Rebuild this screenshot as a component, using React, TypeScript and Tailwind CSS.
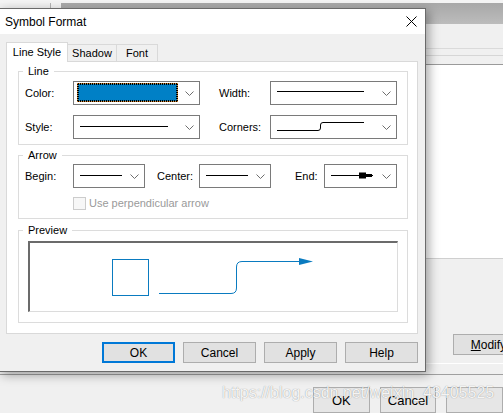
import React from "react";

const Chevron = () => (
  <svg width="9" height="5" viewBox="0 0 9 5">
    <path d="M0.5 0.5 L4.5 4.5 L8.5 0.5" fill="none" stroke="#6e6e6e" strokeWidth="1" />
  </svg>
);

function Combo({ w, children }: { w: string; children?: React.ReactNode }) {
  return (
    <div className={`${w} h-[24px] shrink-0 border border-[#7a7a7a] bg-white flex items-center`}>
      <div className="flex-1 h-full flex items-center pl-[6px]">{children}</div>
      <div className="w-[20px] h-full flex items-center justify-center">
        <Chevron />
      </div>
    </div>
  );
}

const HLine = ({ w, dy = 0 }: { w: number; dy?: number }) => (
  <svg width={w} height="3" viewBox={`0 0 ${w} 3`} style={{ marginTop: dy }}>
    <line x1="0" y1="1.5" x2={w} y2="1.5" stroke="#000" strokeWidth="1" />
  </svg>
);

function Btn({ label, primary }: { label: string; primary?: boolean }) {
  return (
    <div
      className={
        primary
          ? "w-[73px] h-[21px] border-2 border-[#0078d7] bg-[#e1e1e1] flex items-center justify-center text-[12px] text-black"
          : "w-[73px] h-[21px] border border-[#adadad] bg-[#e1e1e1] flex items-center justify-center text-[12px] text-black"
      }
    >
      {label}
    </div>
  );
}

export default function App() {
  return (
    <div className="relative w-[503px] h-[413px] overflow-hidden bg-[#f0f0f0] font-['Liberation_Sans',Arial,sans-serif] text-black">
      {/* background window */}
      <div className="flex flex-col h-full">
        <div className="h-[3px] bg-[#f4f4f4]" />
        <div className="h-[22px] flex">
          <div className="w-[51px] bg-[#f2f2f2] border-r border-[#b4b4b4]" />
          <div className="w-[10px] bg-[#f4f4f4]" />
          <div className="flex-1 bg-gradient-to-b from-[#a8a8a8] to-[#bcbcbc]" />
        </div>
        <div className="h-[25px] bg-[#f0f0f0] border-b border-[#dadada]" />
        <div className="h-[8px] bg-[#f0f0f0] border-b border-[#d6d6d6]" />
        <div className="h-[9px] bg-[#f0f0f0] border-b border-[#9a9a9a]" />
        <div className="h-[200px] bg-white border-b border-[#cfcfcf]" />
        <div className="h-[105px] bg-[#f0f0f0] pt-[75px] pl-[453px]">
          <div className="w-[80px] h-[21px] border border-[#adadad] bg-[#e1e1e1] flex items-center justify-center text-[12px] whitespace-nowrap">
            <span>
              <span className="underline">M</span>odify...
            </span>
          </div>
        </div>
        <div className="h-[1px] bg-white" />
        <div className="h-[11px] bg-[#f0f0f0] border-b border-[#a0a0a0]" />
        <div className="flex-1 bg-[#f0f0f0] pt-[12px] pl-[313px] flex gap-[10px]">
          <div className="w-[73px] h-[26px] border border-[#adadad] bg-[#e6e6e6] flex justify-center pt-[3px] text-[13px]">OK</div>
          <div className="w-[73px] h-[26px] border border-[#adadad] bg-[#e6e6e6] flex justify-center pt-[3px] text-[13px]">Cancel</div>
          <div className="w-[73px] h-[26px] border border-[#adadad] bg-[#e6e6e6]" />
        </div>
      </div>

      {/* dialog window */}
      <div className="absolute left-[-1px] top-[8px] w-[427px] h-[364px] border border-[#6a6a6a] bg-[#f0f0f0] flex flex-col shadow-[3px_3px_10px_rgba(0,0,0,0.35)]">
        <div className="h-[25px] bg-white flex items-center justify-between pl-[5px] pr-[8px]">
          <span className="text-[12px]">Symbol Format</span>
          <svg width="11" height="11" viewBox="0 0 11 11">
            <path d="M0.5 0.5 L10.5 10.5 M10.5 0.5 L0.5 10.5" stroke="#000" strokeWidth="1" />
          </svg>
        </div>
        <div className="flex-1 flex flex-col pt-[8px] pl-[6px] pr-[7px] text-[11px]">
          {/* tabs */}
          <div className="h-[19px] flex items-end relative z-10">
            <div className="w-[62px] h-[20px] -mb-[1px] bg-white border-t border-l border-r border-[#d9d9d9] flex items-center justify-center">
              Line Style
            </div>
            <div className="w-[49px] h-[17px] border-t border-r border-[#d9d9d9] flex items-center justify-center">
              Shadow
            </div>
            <div className="w-[41px] h-[17px] border-t border-r border-[#d9d9d9] flex items-center justify-center">
              Font
            </div>
          </div>
          {/* panel */}
          <div className="h-[273px] border border-[#d9d9d9] bg-white pl-[11px] pr-[9px] pt-[2px] flex flex-col">
            <fieldset className="border border-[#dcdcdc] pl-[6px] pr-[10px] pt-[3px] pb-[5px]">
              <legend className="ml-[-2px] px-[5px] leading-[14px]">Line</legend>
              <div className="flex items-center">
                <div className="w-[48px]">Color:</div>
                <Combo w="w-[127px]">
                  <div className="w-[101px] h-[19px] ml-[-3px] -mt-[1px] border border-dotted border-[#e28a2a] bg-black p-0">
                    <div className="w-full h-full border border-dotted border-black bg-[#0080c6]" />
                  </div>
                </Combo>
                <div className="ml-[19px] w-[51px]">Width:</div>
                <Combo w="w-[127px]">
                  <HLine w={87} dy={-3} />
                </Combo>
              </div>
              <div className="flex items-center mt-[10px]">
                <div className="w-[48px]">Style:</div>
                <Combo w="w-[127px]">
                  <HLine w={88} dy={-2} />
                </Combo>
                <div className="ml-[19px] w-[51px]">Corners:</div>
                <Combo w="w-[127px]">
                  <svg width="88" height="11" viewBox="0 0 88 11" className="mt-[-1px]">
                    <path d="M0 9.5 H41 Q43.5 9.5 43.5 7 V4 Q43.5 1.5 46 1.5 H87" fill="none" stroke="#000" strokeWidth="1" />
                  </svg>
                </Combo>
              </div>
            </fieldset>

            <fieldset className="mt-[3px] border border-[#dcdcdc] pl-[6px] pr-[10px] pt-[2px] pb-[8px]">
              <legend className="ml-[-2px] px-[5px] leading-[14px]">Arrow</legend>
              <div className="flex items-center">
                <div className="w-[48px]">Begin:</div>
                <Combo w="w-[72px]">
                  <HLine w={42} dy={-2} />
                </Combo>
                <div className="ml-[12px] w-[42px]">Center:</div>
                <Combo w="w-[72px]">
                  <HLine w={42} dy={-2} />
                </Combo>
                <div className="ml-[24px] w-[29px]">End:</div>
                <Combo w="w-[73px]">
                  <svg width="43" height="9" viewBox="0 0 43 9" className="mt-[-2px]">
                    <line x1="0" y1="4.5" x2="42" y2="4.5" stroke="#000" strokeWidth="1" />
                    <path d="M28 1.5 H35 V3 H41 V6 H35 V7.5 H28 Z" fill="#000" />
                  </svg>
                </Combo>
              </div>
              <div className="flex items-center mt-[9px] pl-[48px] h-[13px]">
                <div className="w-[13px] h-[13px] border border-[#cccccc] bg-[#f7f7f7]" />
                <span className="ml-[3px] text-[#9a9a9a]">Use perpendicular arrow</span>
              </div>
            </fieldset>

            <fieldset className="mt-[4px] border border-[#dcdcdc] px-[9px] pt-[4px] pb-[10px]">
              <legend className="ml-[-5px] px-[5px] leading-[14px]">Preview</legend>
              <div className="h-[71px] border-t-2 border-l-2 border-t-[#6b6b6b] border-l-[#6b6b6b] border-r border-b border-r-[#dcdcdc] border-b-[#dcdcdc] bg-white">
                <svg width="367" height="68" viewBox="0 0 367 68">
                  <rect x="82.5" y="16.5" width="36" height="36" fill="none" stroke="#0a7bc0" strokeWidth="1" />
                  <path d="M129 50.5 H201 Q206.5 50.5 206.5 45 V24 Q206.5 18.5 212 18.5 H270" fill="none" stroke="#0a7bc0" strokeWidth="1" />
                  <path d="M269 15 L283 18.5 L269 22 Z" fill="#0a7bc0" />
                </svg>
              </div>
            </fieldset>
          </div>
          {/* buttons */}
          <div className="mt-[8px] flex justify-end gap-[8px]">
            <Btn label="OK" primary />
            <Btn label="Cancel" />
            <Btn label="Apply" />
            <Btn label="Help" />
          </div>
        </div>
      </div>

      {/* watermark */}
      <div className="absolute left-[222px] top-[384px] text-[16px] leading-[18px] text-white/90 [text-shadow:0_0_1px_rgba(0,0,0,0.45)] whitespace-nowrap">
        https://blog.csdn.net/weixin_43405525
      </div>
    </div>
  );
}
